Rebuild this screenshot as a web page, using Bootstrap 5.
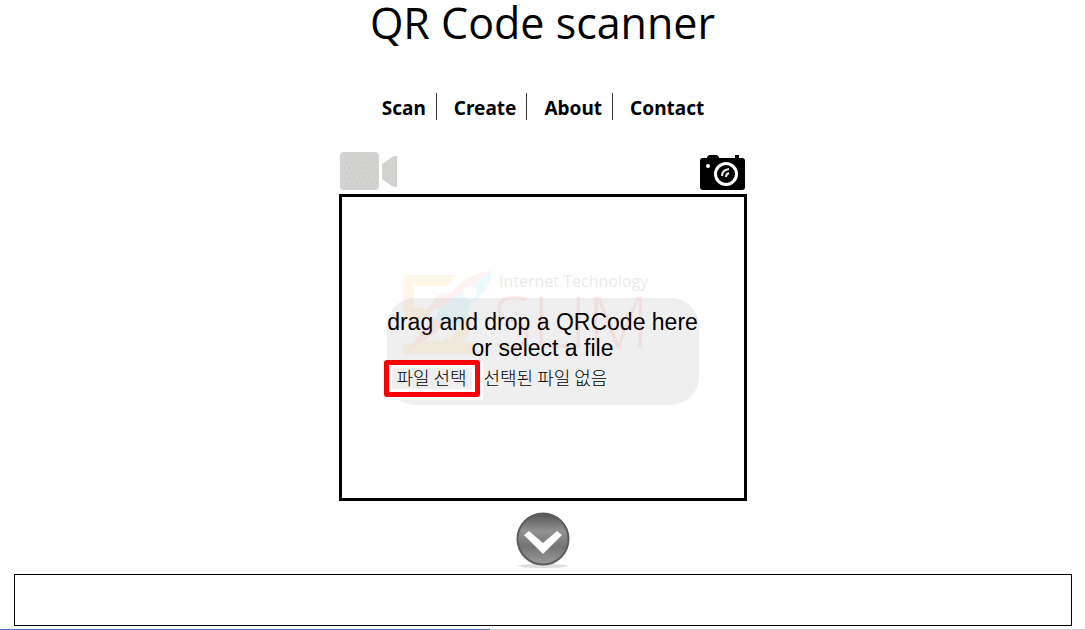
<!DOCTYPE html>
<html lang="en">
<head>
<meta charset="utf-8">
<meta name="viewport" content="width=device-width, initial-scale=1">
<title>QR Code scanner</title>
<link href="https://cdn.jsdelivr.net/npm/bootstrap@5.3.0/dist/css/bootstrap.min.css" rel="stylesheet">
<style>
  body { font-family: "Open Sans", "Noto Sans CJK KR", sans-serif; color: #000; background: #fff; }
  .site-title { font-size: 43px; line-height: 46px; font-weight: 400; }
  .site-nav { margin-top: 47px; }
  .site-nav a { font-family: "Noto Sans", sans-serif; font-size: 19px; line-height: 23px; font-weight: 700; color: #000; text-decoration: none; padding: 4px 10px 0 17px; border-right: 1px solid #333; }
  .site-nav li:first-child a { padding-left: 11px; }
  .site-nav li:last-child a { border-right: 0; }
  .scanner { width: 408px; max-width: 100%; margin-top: 31px; }
  .icon-btn { background: none; border: 0; padding: 0; line-height: 0; }
  .viewport { border: 3px solid #000; height: 307px; padding-top: 7px; }
  .drop-zone { width: 312px; height: 107px; background: #efefef; border-radius: 28px; padding-top: 11px; font-family: "Liberation Sans", sans-serif; font-size: 23px; line-height: 26px; }
  .file-row { font-family: "Noto Sans CJK KR", sans-serif; font-size: 18px; line-height: 24px; font-weight: 300; margin: -1px 0 0 -3px; }
  .file-row span { padding-bottom: 2px; }
  .file-btn { width: 96px; height: 37px; border: 5px solid #f00; border-radius: 3px; background: #efefef; padding: 0 0 2px; font-weight: 300; color: #000; box-shadow: inset 0 0 0 3px #fff, 2px 2px 0 1px #fff; }
  .watermark { left: 57px; top: 73px; opacity: .08; pointer-events: none; }
  .expand { margin-top: 11px; }
  .result { border: 1px solid #000; height: 52px; margin: 5px 13px 3px 14px; }
  .load-bar { height: 1px; background: #d0d0d0; border-radius: 0; }
  .load-bar .progress-bar { background: #3f74cc; }
</style>
</head>
<body class="d-flex flex-column align-items-stretch">
<header class="text-center">
  <h1 class="site-title mb-0">QR Code scanner</h1>
  <nav class="site-nav" aria-label="Main">
    <ul class="list-unstyled d-flex justify-content-center mb-0">
      <li class="d-flex"><a href="#scan">Scan</a></li>
      <li class="d-flex"><a href="#create">Create</a></li>
      <li class="d-flex"><a href="#about">About</a></li>
      <li class="d-flex"><a href="#contact">Contact</a></li>
    </ul>
  </nav>
</header>
<main class="d-flex flex-column">
  <section class="scanner mx-auto">
    <div class="d-flex justify-content-between">
      <button class="icon-btn" type="button" aria-label="Use video">
        <svg width="59" height="43" viewBox="0 0 59 43" fill="#d2d3d1"><rect x="1" y="1" width="39" height="38" rx="4"/><path d="M43 13 53 6q2-1 5-1v31q-3 0-5-1L43 28z"/><path d="M5 7h31M7 12h31M5 17h31M7 22h31M5 27h31M7 32h31" stroke="#bfc0be" stroke-dasharray="1 4"/></svg>
      </button>
      <button class="icon-btn" type="button" aria-label="Use an image">
        <svg width="47" height="43" viewBox="0 0 47 43"><path d="M3 7h4V6l2-2h8l2 2v1h16V4h4v3h3q3 0 3 3v26q0 3-3 3H3q-3 0-3-3V10q0-3 3-3z"/><circle cx="8" cy="15" r="2" fill="#fff"/><circle cx="26" cy="23" r="10.5" fill="none" stroke="#fff" stroke-width="3"/><path d="M22 25q0-6 7-7M26 26q0-3 3-4" fill="none" stroke="#eee" stroke-width="2"/></svg>
      </button>
    </div>
    <div class="viewport position-relative d-flex align-items-center justify-content-center">
      <div class="drop-zone">
        <label class="d-block text-center text-nowrap" for="qr-file">drag and drop a QRCode here<br>or select a file</label>
        <div class="file-row d-flex align-items-center">
          <button class="file-btn" type="button" onclick="document.getElementById('qr-file').click()">파일 선택</button>
          <span class="ms-1">선택된 파일 없음</span>
          <input class="visually-hidden" type="file" id="qr-file" accept="image/*" tabindex="-1">
        </div>
      </div>
      <svg class="watermark position-absolute" width="260" height="90" viewBox="0 0 260 90">
        <path d="M4 5h54L48 16H15v21l18 3-6 9H4zM62 36q16 12 7 28l-6 8h12v12H4v-9l19-4h18q18-4 18-16z" fill="#fa0"/>
        <path d="M93 1Q66 4 54 22L39 25 26 42l14-3-8 20 20-11-3 14 18-13 5-16Q90 22 93 1z" fill="#18c8ee"/>
        <path d="M93 1Q66 4 54 22L39 25 26 42l14-3z" fill="#f66"/>
        <path d="M32 47 10 80l26-16 8-10z" fill="#f44"/>
        <circle cx="71" cy="23" r="7" fill="#fff"/>
        <text x="100" y="17" font-family="Open Sans, sans-serif" font-size="16">Internet Technology</text>
        <text x="94" y="78" font-family="Open Sans, sans-serif" font-size="72" font-weight="300" fill="#f33">SLIM</text>
      </svg>
    </div>
  </section>
  <button class="icon-btn expand align-self-center" type="button" aria-label="Show result">
    <svg width="54" height="57" viewBox="0 0 54 57">
      <defs><linearGradient id="disc" x2="0" y2="1"><stop stop-color="#555"/><stop offset=".35" stop-color="#929292"/><stop offset=".65" stop-color="#747474"/><stop offset="1" stop-color="#999"/></linearGradient></defs>
      <ellipse cx="27" cy="54" rx="25" ry="2" fill="#ddd"/>
      <circle cx="27" cy="27" r="25.5" fill="url(#disc)" stroke="#5c5c5c" stroke-width="2"/>
      <path d="m8 23 5-4 14 12 14-12 5 4-19 19z" fill="#fff"/>
    </svg>
  </button>
  <output class="result d-block" aria-label="Scan result"></output>
</main>
<div class="progress load-bar" role="progressbar" aria-label="Loading" aria-valuenow="45" aria-valuemin="0" aria-valuemax="100"><div class="progress-bar" style="width:45.2%"></div></div>
<script src="https://cdn.jsdelivr.net/npm/bootstrap@5.3.0/dist/js/bootstrap.bundle.min.js"></script>
</body>
</html>
